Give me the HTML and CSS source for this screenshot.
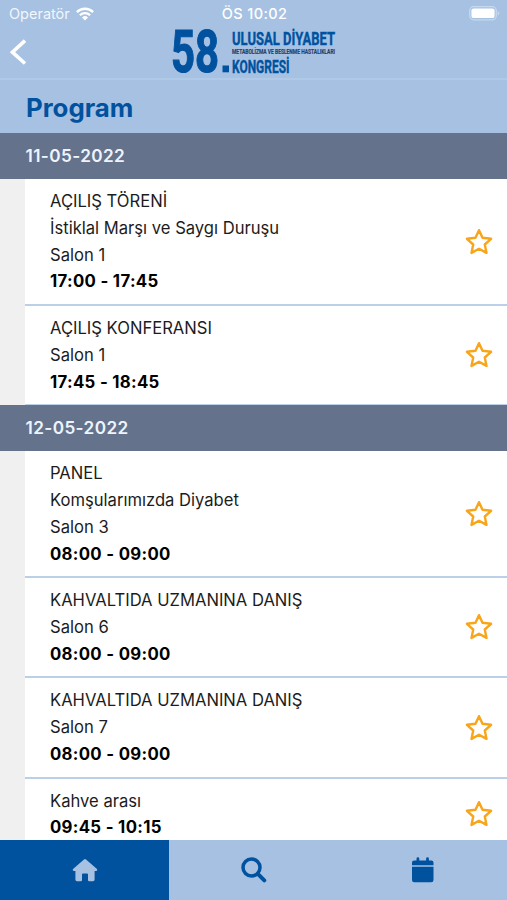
FILE: index.html
```html
<!DOCTYPE html>
<html lang="tr">
<head>
    <meta charset="UTF-8">
    <meta name="viewport" content="width=device-width, initial-scale=1.0">
    <title>Program</title>
    <link rel="stylesheet" href="styles.css">
</head>
<body>
    <svg class="defs" width="0" height="0">
        <symbol id="star" viewBox="0 0 28 28">
            <path d="M14 2.200l3.500 7.600 8.600 1-6.300 5.700 1.700 8.400-7.500-4.200-7.500 4.200 1.700-8.400-6.300-5.700 8.600-1z" fill="none" stroke="#f9a51a" stroke-width="2.400" stroke-linejoin="round"/>
        </symbol>
    </svg>

    <header class="header">
        <div class="status-bar">
            <div class="carrier">
                <span>Operatör</span>
                <svg width="18" height="14" viewBox="0 0 18 14">
                    <g fill="none" stroke="#fff" stroke-width="2.300">
                        <path d="M.9 5.100a11.500 11.500 0 0 1 16.200 0"/>
                        <path d="M3.900 8.200a7.200 7.200 0 0 1 10.200 0"/>
                    </g>
                    <path d="M9 13.600l-3-3.200a4.300 4.300 0 0 1 6 0z" fill="#fff"/>
                </svg>
            </div>
            <div class="clock">ÖS 10:02</div>
            <div class="battery">
                <svg width="31" height="15" viewBox="0 0 31 15">
                    <rect x=".7" y=".7" width="26.600" height="13.100" rx="4" fill="none" stroke="#c5d9ef" stroke-width="1.300"/>
                    <rect x="2.400" y="2.400" width="23.200" height="9.700" rx="2.200" fill="#fff"/>
                    <path d="M28.700 5v4.600q1.600-.7 1.600-2.300T28.700 5z" fill="#c5d9ef"/>
                </svg>
            </div>
        </div>
        <div class="nav-bar">
            <svg class="back" width="18" height="26" viewBox="0 0 18 26">
                <path d="M15 1.700L2.400 13.200 15 24.500" fill="none" stroke="#fff" stroke-width="3.600"/>
            </svg>
            <svg class="logo" width="168" height="50" viewBox="0 0 168 50">
                <text class="logo-big" x="0" y="46" textLength="48" lengthAdjust="spacingAndGlyphs">58</text>
                <rect class="logo-dot" x="51.500" y="39.500" width="6.500" height="6.800"/>
                <text class="logo-line" x="61" y="18.800" textLength="103" lengthAdjust="spacingAndGlyphs">ULUSAL DİYABET</text>
                <text class="logo-small" x="61" y="28" textLength="103" lengthAdjust="spacingAndGlyphs">METABOLİZMA VE BESLENME HASTALIKLARI</text>
                <text class="logo-line" x="61" y="46.800" textLength="57.500" lengthAdjust="spacingAndGlyphs">KONGRESİ</text>
            </svg>
        </div>
        <h1>Program</h1>
    </header>

    <main class="program">
        <h2>11-05-2022</h2>
        <div class="session">
            <div class="info">
                <p>AÇILIŞ TÖRENİ</p>
                <p>İstiklal Marşı ve Saygı Duruşu</p>
                <p>Salon 1</p>
                <p class="time">17:00 - 17:45</p>
            </div>
            <svg class="star"><use href="#star"/></svg>
        </div>
        <div class="session">
            <div class="info">
                <p>AÇILIŞ KONFERANSI</p>
                <p>Salon 1</p>
                <p class="time">17:45 - 18:45</p>
            </div>
            <svg class="star"><use href="#star"/></svg>
        </div>

        <h2>12-05-2022</h2>
        <div class="session">
            <div class="info">
                <p>PANEL</p>
                <p>Komşularımızda Diyabet</p>
                <p>Salon 3</p>
                <p class="time">08:00 - 09:00</p>
            </div>
            <svg class="star"><use href="#star"/></svg>
        </div>
        <div class="session">
            <div class="info">
                <p>KAHVALTIDA UZMANINA DANIŞ</p>
                <p>Salon 6</p>
                <p class="time">08:00 - 09:00</p>
            </div>
            <svg class="star"><use href="#star"/></svg>
        </div>
        <div class="session">
            <div class="info">
                <p>KAHVALTIDA UZMANINA DANIŞ</p>
                <p>Salon 7</p>
                <p class="time">08:00 - 09:00</p>
            </div>
            <svg class="star"><use href="#star"/></svg>
        </div>
        <div class="session">
            <div class="info">
                <p>Kahve arası</p>
                <p class="time">09:45 - 10:15</p>
            </div>
            <svg class="star"><use href="#star"/></svg>
        </div>
    </main>

    <nav class="tab-bar">
        <div class="tab active">
            <svg width="26" height="24" viewBox="0 0 26 24">
                <path d="M12 1.500q1-.9 2 0L25 11q.9 1.400-.7 2h-1.700v8.600q0 1.600-1.600 1.600h-3.800q-1.200 0-1.200-1.200v-5.400q0-1-1-1h-4q-1 0-1 1V22q0 1.200-1.200 1.200H5q-1.600 0-1.600-1.600V13H1.700q-1.600-.6-.7-2z" fill="#a6c1e2"/>
            </svg>
        </div>
        <div class="tab">
            <svg width="26" height="26" viewBox="0 0 26 26">
                <circle cx="10.500" cy="10.500" r="8.500" fill="none" stroke="#00529f" stroke-width="3.500"/>
                <path d="M16.800 16.800l6.500 6.500" stroke="#00529f" stroke-width="4" stroke-linecap="round"/>
            </svg>
        </div>
        <div class="tab">
            <svg width="24" height="26" viewBox="0 0 24 26">
                <path d="M1 8.200V5.600Q1 3.500 3.200 3.500h2.300V1.700a1.300 1.300 0 0 1 2.800 0v1.800h6.800V1.700a1.300 1.300 0 0 1 2.800 0v1.800h2.400q2.200 0 2.200 2.100v2.600zM1 9.800h21.500V23q0 2.300-2.300 2.300h-17Q1 25.300 1 23z" fill="#00529f"/>
            </svg>
        </div>
    </nav>
</body>
</html>
```
FILE: styles.css
```css
* {
    box-sizing: border-box;
    margin: 0;
    padding: 0;
}
body {
    height: 900px;
    display: flex;
    flex-direction: column;
    overflow: hidden;
    background: #f0f0f0;
    color: #1c1c1c;
    font-family: Inter, "Liberation Sans", sans-serif;
    font-size: 16.6px;
}
svg {
    display: block;
    flex-shrink: 0;
}
.defs {
    position: absolute;
}

/* Header */
.header {
    flex: none;
    height: 133px;
    background: #a6c1e2;
}
.status-bar {
    display: grid;
    grid-template-columns: 1fr auto 1fr;
    align-items: center;
    height: 26px;
    padding: 1px 7px 0 9px;
    color: #fff;
    font-size: 14.5px;
}
.carrier {
    display: flex;
    align-items: center;
    gap: 6px;
    color: #f1f6fc;
}
.clock {
    font-weight: 500;
    letter-spacing: .4px;
}
.battery {
    justify-self: end;
}
.nav-bar {
    display: flex;
    align-items: flex-start;
    height: 54px;
    border-bottom: 2px solid #afcae9;
}
.back {
    margin: 13px 0 0 10px;
}
.logo {
    margin-left: 142.5px;
    overflow: visible;
}
.logo text {
    font-family: Roboto, sans-serif;
    font-weight: bold;
    fill: #00529f;
    stroke: #00529f;
    stroke-width: .4px;
}
.logo .logo-big {
    font-size: 60px;
    stroke-width: 1.2px;
}
.logo .logo-line {
    font-size: 19px;
}
.logo .logo-small {
    font-size: 7px;
    fill: #27436b;
    stroke: #27436b;
    stroke-width: .2px;
}
.logo-dot {
    fill: #00529f;
}
h1 {
    padding-left: 26px;
    color: #00529f;
    font-size: 25.8px;
    line-height: 55px;
}

/* Session list */
.program {
    flex: 1;
    min-height: 0;
    overflow: hidden;
}
h2 {
    height: 46px;
    padding-left: 25.5px;
    background: #64728c;
    color: #eef4fd;
    font-size: 17.2px;
    font-weight: 600;
    line-height: 46px;
    letter-spacing: .4px;
}
.session {
    display: flex;
    align-items: center;
    justify-content: space-between;
    margin-left: 25px;
    padding: 9px 14px 8.8px 25px;
    background: #fff;
    border-bottom: 2px solid #bccfe8;
}
.session + h2 {
    margin-top: -1px;
}
.info p {
    line-height: 26.8px;
    white-space: nowrap;
}
.info .time {
    color: #000;
    font-size: 16.8px;
    font-weight: 700;
    letter-spacing: .3px;
}
.star {
    width: 28px;
    height: 28px;
}

/* Bottom tabs */
.tab-bar {
    flex: none;
    display: grid;
    grid-template-columns: repeat(3, 1fr);
    height: 60px;
    background: #a6c1e2;
}
.tab {
    display: flex;
    align-items: center;
    justify-content: center;
}
.tab.active {
    background: #00529f;
}
```
